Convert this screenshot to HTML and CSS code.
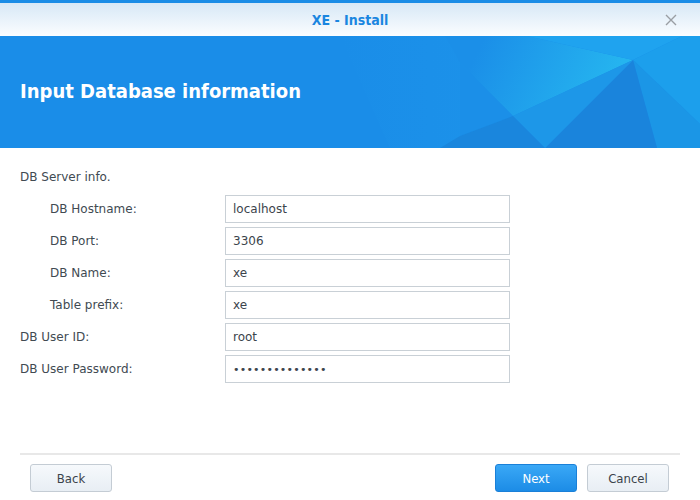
FILE: index.html
```html
<!DOCTYPE html>
<html>
<head>
<meta charset="utf-8">
<link rel="stylesheet" href="styles.css">
</head>
<body>
<div class="window">
  <div class="topbar"></div>
  <div class="titlebar">
    <span class="title">XE - Install</span>
    <svg class="close" width="12" height="12" viewBox="0 0 12 12"><path d="M1 1L11 11M11 1L1 11" stroke="#9a9ea3" stroke-width="1.4" fill="none"/></svg>
  </div>
  <div class="banner">
    <svg class="facets" width="700" height="112" viewBox="0 0 700 112">
      <defs>
        <linearGradient id="lg" x1="480" y1="10" x2="600" y2="70" gradientUnits="userSpaceOnUse">
          <stop offset="0" stop-color="#1b8fe8"/>
          <stop offset="1" stop-color="#25b4ef"/>
        </linearGradient>
        <linearGradient id="band" x1="0" y1="0" x2="1" y2="0">
          <stop offset="0" stop-color="#1a8de8"/>
          <stop offset="1" stop-color="#1c93ea"/>
        </linearGradient>
      </defs>
      <polygon points="340,0 445,0 520,112 390,112" fill="url(#band)"/>
      <polygon points="445,0 527,0 633,24 513,80 460,27" fill="url(#lg)"/>
      <polygon points="527,0 682,0 633,24" fill="#1fa3ef"/>
      <polygon points="682,0 700,0 700,88 633,24" fill="#1c9fec"/>
      <polygon points="633,24 700,88 700,112 657,112" fill="#1b96e6"/>
      <polygon points="633,24 657,112 545,112" fill="#1a84dc"/>
      <polygon points="633,24 513,80 545,112" fill="#1d97e8"/>
      <polygon points="460,27 513,80 460,100" fill="#1b8fe8"/>
      <polygon points="513,80 545,112 440,112 460,100" fill="#1a86dd"/>
    </svg>
    <h1 class="banner-title">Input Database information</h1>
  </div>
  <div class="content">
    <div class="section">DB Server info.</div>
    <div class="form">
      <label class="lbl indent">DB Hostname:</label><input class="field" type="text" value="localhost" readonly>
      <label class="lbl indent">DB Port:</label><input class="field" type="text" value="3306" readonly>
      <label class="lbl indent">DB Name:</label><input class="field" type="text" value="xe" readonly>
      <label class="lbl indent">Table prefix:</label><input class="field" type="text" value="xe" readonly>
      <label class="lbl">DB User ID:</label><input class="field" type="text" value="root" readonly>
      <label class="lbl">DB User Password:</label><input class="field pw" type="password" value="xxxxxxxxxxxxxx" readonly>
    </div>
  </div>
  <div class="footer">
    <button class="btn">Back</button>
    <div class="spacer"></div>
    <button class="btn primary">Next</button>
    <button class="btn">Cancel</button>
  </div>
</div>
</body>
</html>
```
FILE: styles.css
```css
* { box-sizing: border-box; }
html, body { margin: 0; padding: 0; background: #fff; }
body { font-family: "DejaVu Sans", Verdana, sans-serif; font-size: 12px; color: #414a52; }
.window { width: 700px; height: 500px; display: flex; flex-direction: column; overflow: hidden; }
.topbar { height: 3px; background: #1a8ce6; }
.titlebar {
  height: 33px; position: relative; display: flex; align-items: center; justify-content: center;
  background: linear-gradient(#d7e8f6, #fbfdff);
}
.title { font-family: "DejaVu Sans Condensed", "DejaVu Sans", sans-serif; font-weight: bold; font-size: 14px; color: #1a86e0; }
.close { position: absolute; right: 23px; top: 11px; }
.banner { height: 112px; position: relative; background: #1a8de8; display: flex; align-items: center; }
.facets { position: absolute; left: 0; top: 0; }
.banner-title {
  position: relative; margin: 0 0 0 20px; padding-bottom: 2px;
  font-family: "DejaVu Sans Condensed", "DejaVu Sans", sans-serif; font-weight: bold; font-size: 20px; color: #fff;
}
.content { flex: 1; padding: 20px 20px 0 20px; }
.section { line-height: 18px; margin-bottom: 9px; }
.form { display: grid; grid-template-columns: 205px 285px; row-gap: 4px; align-items: center; }
.lbl { line-height: 28px; }
.indent { padding-left: 30px; }
.field {
  height: 28px; width: 285px; border: 1px solid #c9d0d6; border-radius: 0; padding: 0 7px;
  font-family: "DejaVu Sans", Verdana, sans-serif; font-size: 12px; color: #3c444c; background: #fff; outline: none;
}
.pw { letter-spacing: 0.2px; font-size: 11px; }
.footer { margin: 0 20px; border-top: 2px solid #e8e8e8; padding: 9px 11px 8px 10px; display: flex; gap: 10px; }
.spacer { flex: 1; }
.btn {
  width: 82px; height: 28px; border: 1px solid #c4ccd4; border-radius: 3px;
  background: linear-gradient(#f6f9fc, #e8eef4);
  font-family: "DejaVu Sans Condensed", "DejaVu Sans", sans-serif; font-size: 13px; color: #3b434b;
}
.primary { background: linear-gradient(#3aa8f6, #1c8ce6); border-color: #1a80d8; color: #fff; }
```
